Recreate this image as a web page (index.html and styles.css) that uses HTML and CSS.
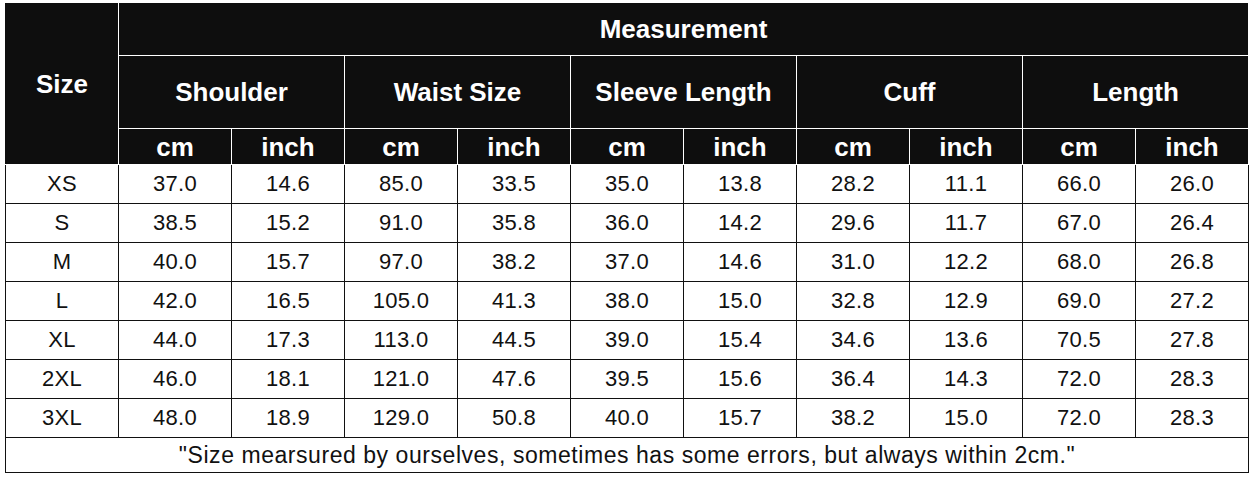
FILE: index.html
```html
<!DOCTYPE html>
<html lang="en">
    <head>
        <meta charset="UTF-8" />
        <meta name="viewport" content="width=device-width, initial-scale=1.0" />
        <title>Size Chart</title>
        <link rel="stylesheet" href="styles.css">
    </head>
    <body>
        <table class="size-chart">
            <colgroup>
                <col span="11" class="col">
            </colgroup>
            <thead>
                <tr class="row-title">
                    <th rowspan="3" class="size-head">Size</th>
                    <th colspan="10">Measurement</th>
                </tr>
                <tr class="row-group">
                    <th colspan="2">Shoulder</th>
                    <th colspan="2">Waist Size</th>
                    <th colspan="2">Sleeve Length</th>
                    <th colspan="2">Cuff</th>
                    <th colspan="2">Length</th>
                </tr>
                <tr class="row-unit">
                    <th>cm</th><th>inch</th>
                    <th>cm</th><th>inch</th>
                    <th>cm</th><th>inch</th>
                    <th>cm</th><th>inch</th>
                    <th>cm</th><th>inch</th>
                </tr>
            </thead>
            <tbody>
                <tr><td>XS</td><td>37.0</td><td>14.6</td><td>85.0</td><td>33.5</td><td>35.0</td><td>13.8</td><td>28.2</td><td>11.1</td><td>66.0</td><td>26.0</td></tr>
                <tr><td>S</td><td>38.5</td><td>15.2</td><td>91.0</td><td>35.8</td><td>36.0</td><td>14.2</td><td>29.6</td><td>11.7</td><td>67.0</td><td>26.4</td></tr>
                <tr><td>M</td><td>40.0</td><td>15.7</td><td>97.0</td><td>38.2</td><td>37.0</td><td>14.6</td><td>31.0</td><td>12.2</td><td>68.0</td><td>26.8</td></tr>
                <tr><td>L</td><td>42.0</td><td>16.5</td><td>105.0</td><td>41.3</td><td>38.0</td><td>15.0</td><td>32.8</td><td>12.9</td><td>69.0</td><td>27.2</td></tr>
                <tr><td>XL</td><td>44.0</td><td>17.3</td><td>113.0</td><td>44.5</td><td>39.0</td><td>15.4</td><td>34.6</td><td>13.6</td><td>70.5</td><td>27.8</td></tr>
                <tr><td>2XL</td><td>46.0</td><td>18.1</td><td>121.0</td><td>47.6</td><td>39.5</td><td>15.6</td><td>36.4</td><td>14.3</td><td>72.0</td><td>28.3</td></tr>
                <tr><td>3XL</td><td>48.0</td><td>18.9</td><td>129.0</td><td>50.8</td><td>40.0</td><td>15.7</td><td>38.2</td><td>15.0</td><td>72.0</td><td>28.3</td></tr>
                <tr class="row-note">
                    <td colspan="11">"Size mearsured by ourselves, sometimes has some errors, but always within 2cm."</td>
                </tr>
            </tbody>
        </table>
    </body>
</html>
```

FILE: styles.css
```css
body {
    margin: 0;
    padding: 3px 0 0 5px;
    background-color: #fff;
    font-family: "Liberation Sans", Arial, sans-serif;
}
.size-chart {
    border-collapse: collapse;
    table-layout: fixed;
    width: 1244px;
}
.col {
    width: 113px;
}
.size-chart th,
.size-chart td {
    padding: 0;
    text-align: center;
    vertical-align: middle;
    white-space: nowrap;
}
.size-chart th {
    background-color: #0e0e0e;
    color: #fff;
    font-size: 26px;
    font-weight: bold;
    border: 1px solid #fff;
}
.size-chart td {
    color: #111;
    font-size: 22px;
    letter-spacing: 0.3px;
    border: 1px solid #111;
}
.row-title th {
    height: 51px;
    border-top-color: #0e0e0e;
}
.row-group th {
    height: 72px;
}
.row-unit th {
    height: 34px;
    padding-top: 1px;
}
.size-head {
    border-left-color: #0e0e0e !important;
}
.size-chart tbody tr {
    height: 39px;
}
.size-chart tbody tr.row-note {
    height: 35px;
}
.row-note td {
    height: 34px;
    font-size: 23px;
    letter-spacing: 0.55px;
}
```
